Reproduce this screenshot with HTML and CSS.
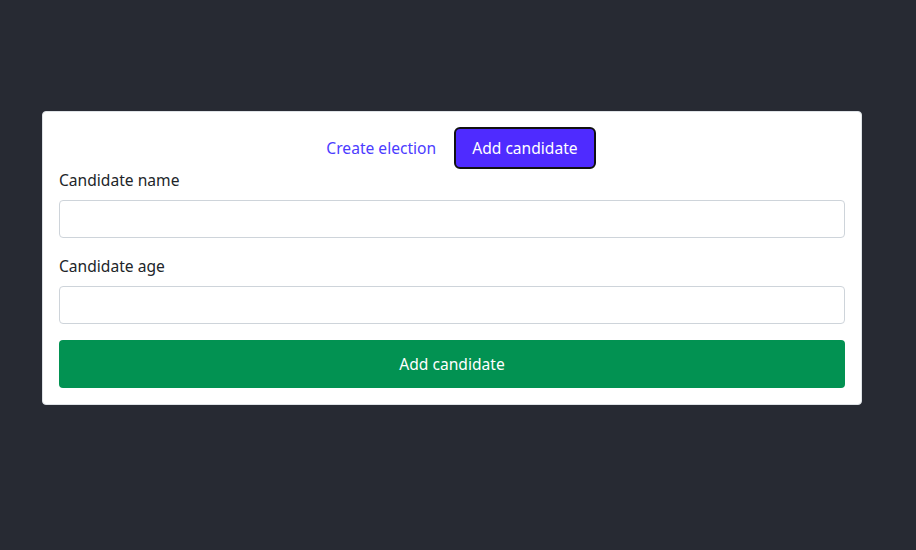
FILE: index.html
```html
<!DOCTYPE html>
<html>
<head>
<meta charset="utf-8">
<link rel="stylesheet" href="styles.css">
</head>
<body>
<main class="page">
  <section class="card">
    <nav class="tabs">
      <a class="tab" href="#">Create election</a>
      <a class="tab tab-active" href="#">Add candidate</a>
    </nav>
    <form class="form">
      <label class="label" for="name">Candidate name</label>
      <input class="input" id="name" type="text">
      <label class="label" for="age">Candidate age</label>
      <input class="input" id="age" type="text">
      <button class="submit" type="button">Add candidate</button>
    </form>
  </section>
</main>
</body>
</html>
```
FILE: styles.css
```css
html, body {
  margin: 0;
  padding: 0;
  background: #272a33;
  height: 100%;
}
body {
  font-family: "Noto Sans", "Open Sans", sans-serif;
  font-size: 15.6px;
  color: #212529;
}
.page {
  padding: 111px 54px 0 42px;
}
.card {
  background: #ffffff;
  border: 1px solid #dee2e6;
  border-radius: 4px;
  padding: 15px 16px 16px 16px;
  width: 786px;
}
.tabs {
  display: flex;
  justify-content: center;
  align-items: center;
  height: 42px;
}
.tab {
  display: flex;
  align-items: center;
  height: 38px;
  padding: 0 16px;
  color: #4c3cff;
  text-decoration: none;
  border: 2px solid transparent;
  border-radius: 6px;
  line-height: 24px;
}
.tab-active {
  background: #4f2bff;
  color: #ffffff;
  border-color: #111111;
}
.form {
  display: flex;
  flex-direction: column;
}
.label {
  line-height: 22px;
  margin-bottom: 9px;
}
.input {
  height: 38px;
  box-sizing: border-box;
  border: 1px solid #ced4da;
  border-radius: 4px;
  margin: 0 0 16px 0;
  font: inherit;
  padding: 6px 12px;
}
.label + .input + .label {
  margin-top: 1px;
}
.submit {
  height: 48px;
  border: none;
  border-radius: 4px;
  background: #029252;
  color: #ffffff;
  font: inherit;
}
```
